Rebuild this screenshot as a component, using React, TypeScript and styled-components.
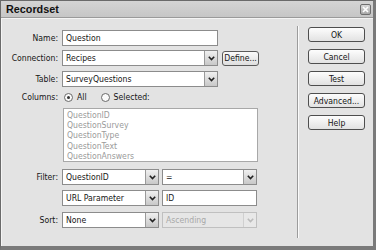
import React from "react";
import styled, { createGlobalStyle } from "styled-components";

const GlobalStyle = createGlobalStyle`
  html, body { margin: 0; padding: 0; background: #e2e2e2; }
  body { font-family: "DejaVu Sans Condensed", "Liberation Sans", sans-serif; font-size: 8.6px; color: #151515; }
`;

const Dialog = styled.div`
  width: 376px;
  height: 250px;
  box-sizing: border-box;
  border: 1px solid #6a6a6a;
  border-right: 3px solid #7a7a7a;
  border-bottom: 4px solid #7a7a7a;
  background: #e3e3e3;
  display: flex;
  flex-direction: column;
  overflow: hidden;
`;

const TitleBar = styled.div`
  height: 16px;
  flex: none;
  display: flex;
  align-items: center;
  justify-content: space-between;
  padding: 0 2px 0 5px;
  background: linear-gradient(#d4d4d4, #c6c6c6);
  border-bottom: 1px solid #9a9a9a;
`;

const Title = styled.span`
  font-family: "Liberation Sans", sans-serif;
  font-weight: bold;
  font-size: 10.8px;
  color: #111;
`;

const CloseBox = styled.div`
  width: 11px;
  height: 11px;
  box-sizing: border-box;
  border: 1px solid #6f6f6f;
  border-radius: 2px;
  background: linear-gradient(#d8d8d8, #a8a8a8);
  display: flex;
  align-items: center;
  justify-content: center;
`;

const Body = styled.div`
  flex: 1;
  display: flex;
  border-left: 1px solid #f4f4f4;
  border-top: 1px solid #f4f4f4;
`;

const Form = styled.div`
  width: 257px;
  padding-top: 11px;
  display: flex;
  flex-direction: column;
`;

const Row = styled.div<{ $mt: number }>`
  display: flex;
  align-items: center;
  margin-top: ${(p) => p.$mt}px;
`;

const Label = styled.div`
  width: 56px;
  text-align: right;
  padding-right: 4px;
  flex: none;
`;

const Field = styled.div<{ $w: number; $disabled?: boolean }>`
  width: ${(p) => p.$w}px;
  height: 16px;
  box-sizing: border-box;
  border: 1px solid #8c8c8c;
  background: ${(p) => (p.$disabled ? "#e6e6e6" : "#fff")};
  color: ${(p) => (p.$disabled ? "#a8a8a8" : "#151515")};
  border-color: ${(p) => (p.$disabled ? "#c0c0c0" : "#8c8c8c")};
  display: flex;
  align-items: center;
  padding-left: 3px;
  flex: none;
`;

const FieldText = styled.span`
  flex: 1;
`;

const ArrowBox = styled.div<{ $disabled?: boolean }>`
  width: 13px;
  height: 14px;
  box-sizing: border-box;
  border-left: 1px solid ${(p) => (p.$disabled ? "#d0d0d0" : "#9a9a9a")};
  background: ${(p) =>
    p.$disabled ? "#e8e8e8" : "linear-gradient(#f0f0f0, #c8c8c8)"};
  display: flex;
  align-items: center;
  justify-content: center;
`;

const Gap = styled.div<{ $w: number }>`
  width: ${(p) => p.$w}px;
  flex: none;
`;

const SmallButton = styled.div`
  width: 44px;
  height: 15px;
  box-sizing: border-box;
  border: 1px solid #5a5a5a;
  border-radius: 3px;
  background: linear-gradient(#fafafa, #dedede);
  display: flex;
  align-items: center;
  justify-content: center;
`;

const RadioRow = styled(Row)`
  height: 12px;
`;

const Radio = styled.div<{ $on?: boolean }>`
  width: 9px;
  height: 9px;
  box-sizing: border-box;
  border: 1px solid #6a6a6a;
  border-radius: 50%;
  background: #fafafa;
  display: flex;
  align-items: center;
  justify-content: center;
  margin: 0 4px 0 2px;
  &::after {
    content: "";
    width: 3px;
    height: 3px;
    border-radius: 50%;
    background: ${(p) => (p.$on ? "#333" : "transparent")};
  }
`;

const ListBox = styled.div`
  margin-left: 61px;
  width: 195px;
  height: 54px;
  box-sizing: border-box;
  border: 1px solid #a8a8a8;
  background: #fff;
  padding: 1px 3px;
  color: #9a9a9a;
  line-height: 10.2px;
`;

const Divider = styled.div`
  width: 1px;
  margin: 7px 0 8px 38px;
  background: #9c9c9c;
  border-right: 1px solid #fbfbfb;
`;

const Buttons = styled.div`
  margin-left: 9px;
  padding-top: 8px;
  display: flex;
  flex-direction: column;
  gap: 7px;
`;

const Button = styled.div`
  width: 57px;
  height: 15px;
  box-sizing: border-box;
  border: 1px solid #4e4e4e;
  border-radius: 3px;
  background: linear-gradient(#fdfdfd, #e2e2e2);
  display: flex;
  align-items: center;
  justify-content: center;
`;

const Chevron = ({ color = "#222" }: { color?: string }) => (
  <svg width="7" height="5" viewBox="0 0 7 5">
    <path d="M0.8 0.8 L3.5 3.6 L6.2 0.8" stroke={color} strokeWidth="1.6" fill="none" />
  </svg>
);

const Select = ({ w, text, disabled }: { w: number; text: string; disabled?: boolean }) => (
  <Field $w={w} $disabled={disabled}>
    <FieldText>{text}</FieldText>
    <ArrowBox $disabled={disabled}>
      <Chevron color={disabled ? "#bbb" : "#222"} />
    </ArrowBox>
  </Field>
);

export default function App() {
  return (
    <>
      <GlobalStyle />
      <Dialog>
        <TitleBar>
          <Title>Recordset</Title>
          <CloseBox>
            <svg width="7" height="7" viewBox="0 0 7 7">
              <path d="M1 1 L6 6 M6 1 L1 6" stroke="#fff" strokeWidth="1.6" />
            </svg>
          </CloseBox>
        </TitleBar>
        <Body>
          <Form>
            <Row $mt={0}>
              <Label>Name:</Label>
              <Field $w={156}>Question</Field>
            </Row>
            <Row $mt={4}>
              <Label>Connection:</Label>
              <Select w={156} text="Recipes" />
              <Gap $w={4} />
              <SmallButton>Define...</SmallButton>
            </Row>
            <Row $mt={5}>
              <Label>Table:</Label>
              <Select w={156} text="SurveyQuestions" />
            </Row>
            <RadioRow $mt={4}>
              <Label>Columns:</Label>
              <Radio $on />
              <span>All</span>
              <Gap $w={12} />
              <Radio />
              <span>Selected:</span>
            </RadioRow>
            <Row $mt={5}>
              <ListBox>
                QuestionID
                <br />
                QuestionSurvey
                <br />
                QuestionType
                <br />
                QuestionText
                <br />
                QuestionAnswers
              </ListBox>
            </Row>
            <Row $mt={7}>
              <Label>Filter:</Label>
              <Select w={97} text="QuestionID" />
              <Gap $w={3} />
              <Select w={95} text="=" />
            </Row>
            <Row $mt={5}>
              <Label />
              <Select w={97} text="URL Parameter" />
              <Gap $w={3} />
              <Field $w={95}>ID</Field>
            </Row>
            <Row $mt={6}>
              <Label>Sort:</Label>
              <Select w={97} text="None" />
              <Gap $w={3} />
              <Select w={95} text="Ascending" disabled />
            </Row>
          </Form>
          <Divider />
          <Buttons>
            <Button>OK</Button>
            <Button>Cancel</Button>
            <Button>Test</Button>
            <Button>Advanced...</Button>
            <Button>Help</Button>
          </Buttons>
        </Body>
      </Dialog>
    </>
  );
}
